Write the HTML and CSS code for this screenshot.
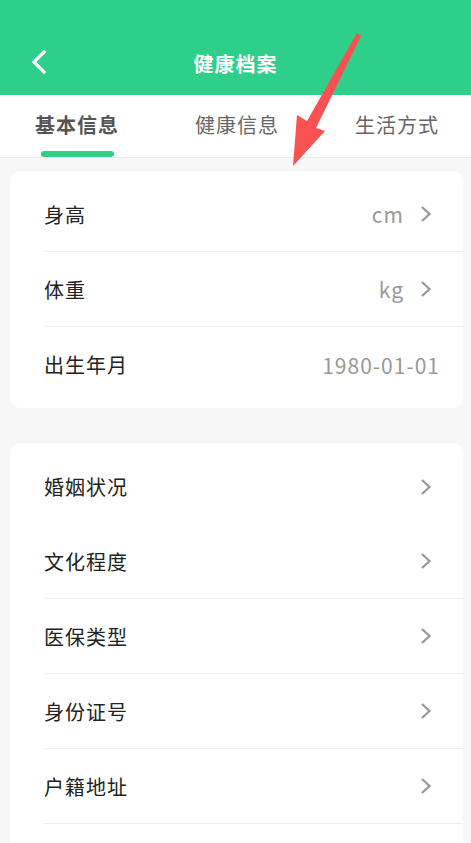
FILE: index.html
```html
<!DOCTYPE html>
<html lang="zh-CN">
<head>
    <meta charset="UTF-8">
    <meta name="viewport" content="width=device-width, initial-scale=1.0">
    <title>健康档案</title>
    <link rel="stylesheet" href="styles.css">
</head>
<body>
    <!-- Top bar -->
    <header class="topbar">
        <div class="nav">
            <button class="back" aria-label="返回">
                <svg width="18" height="24" viewBox="0 0 18 24"><path d="M14 2 L4 12 L14 22" fill="none" stroke="#fff" stroke-width="3.2" stroke-linecap="square"/></svg>
            </button>
            <h1 class="title">健康档案</h1>
        </div>
    </header>

    <!-- Tabs -->
    <nav class="tabs">
        <div class="tab active">基本信息</div>
        <div class="tab">健康信息</div>
        <div class="tab">生活方式</div>
    </nav>

    <main class="content">
        <section class="card">
            <div class="row">
                <div class="row-inner">
                    <span class="label">身高</span>
                    <span class="value">cm</span>
                    <svg class="chev" width="12" height="18" viewBox="0 0 12 18"><path d="M2 2 L9.5 9 L2 16" fill="none" stroke="#999" stroke-width="2.3"/></svg>
                </div>
            </div>
            <div class="row">
                <div class="row-inner">
                    <span class="label">体重</span>
                    <span class="value">kg</span>
                    <svg class="chev" width="12" height="18" viewBox="0 0 12 18"><path d="M2 2 L9.5 9 L2 16" fill="none" stroke="#999" stroke-width="2.3"/></svg>
                </div>
            </div>
            <div class="row">
                <div class="row-inner last">
                    <span class="label">出生年月</span>
                    <span class="value">1980-01-01</span>
                </div>
            </div>
        </section>

        <section class="card">
            <div class="row">
                <div class="row-inner plain">
                    <span class="label">婚姻状况</span>
                    <svg class="chev" width="12" height="18" viewBox="0 0 12 18"><path d="M2 2 L9.5 9 L2 16" fill="none" stroke="#999" stroke-width="2.3"/></svg>
                </div>
            </div>
            <div class="row">
                <div class="row-inner">
                    <span class="label">文化程度</span>
                    <svg class="chev" width="12" height="18" viewBox="0 0 12 18"><path d="M2 2 L9.5 9 L2 16" fill="none" stroke="#999" stroke-width="2.3"/></svg>
                </div>
            </div>
            <div class="row">
                <div class="row-inner">
                    <span class="label">医保类型</span>
                    <svg class="chev" width="12" height="18" viewBox="0 0 12 18"><path d="M2 2 L9.5 9 L2 16" fill="none" stroke="#999" stroke-width="2.3"/></svg>
                </div>
            </div>
            <div class="row">
                <div class="row-inner">
                    <span class="label">身份证号</span>
                    <svg class="chev" width="12" height="18" viewBox="0 0 12 18"><path d="M2 2 L9.5 9 L2 16" fill="none" stroke="#999" stroke-width="2.3"/></svg>
                </div>
            </div>
            <div class="row">
                <div class="row-inner">
                    <span class="label">户籍地址</span>
                    <svg class="chev" width="12" height="18" viewBox="0 0 12 18"><path d="M2 2 L9.5 9 L2 16" fill="none" stroke="#999" stroke-width="2.3"/></svg>
                </div>
            </div>
            <div class="row">
                <div class="row-inner last"></div>
            </div>
        </section>
    </main>

    <!-- annotation arrow drawn over the page -->
    <svg class="pointer" width="471" height="200" viewBox="0 0 471 200">
        <polygon points="357,33 361,36 316,128 325,131 293,166 297,115 307,121" fill="#fa5252"/>
    </svg>
</body>
</html>
```

FILE: styles.css
```css
* {
    box-sizing: border-box;
}
body {
    margin: 0;
    font-family: "Noto Sans CJK SC", "Noto Sans", sans-serif;
    background: #f7f7f7;
    color: #222;
    width: 471px;
    height: 843px;
    overflow: hidden;
}
.topbar {
    background: #2dcf8a;
    height: 95px;
    padding-top: 32px;
}
.nav {
    position: relative;
    height: 63px;
    display: flex;
    align-items: center;
    justify-content: center;
}
.back {
    position: absolute;
    left: 27px;
    top: 18px;
    background: none;
    border: none;
    padding: 0;
    width: 24px;
    height: 26px;
}
.title {
    margin: 0;
    color: #fff;
    font-size: 20px;
    font-weight: bold;
    letter-spacing: 1px;
}
.tabs {
    background: #fff;
    height: 63px;
    border-bottom: 1px solid #ececec;
    display: grid;
    grid-template-columns: repeat(3, 160px);
    margin-left: -3px;
}
.tabs .tab {
    position: relative;
    display: flex;
    justify-content: center;
    padding-top: 15px;
    font-size: 20px;
    color: #666;
    letter-spacing: 1px;
}
.tabs .tab.active {
    color: #555;
    font-weight: bold;
}
.tabs .tab.active::after {
    content: "";
    position: absolute;
    left: 44px;
    bottom: 0;
    width: 73px;
    height: 6px;
    border-radius: 3px;
    background: #2dcf8a;
}
.content {
    padding: 13px 8px 0 10px;
    display: flex;
    flex-direction: column;
    gap: 35px;
}
.card {
    background: #fff;
    border-radius: 10px;
    padding: 6px 0;
}
.row {
    padding-left: 34px;
}
.row-inner {
    height: 75px;
    display: flex;
    align-items: center;
    padding-right: 23px;
    border-bottom: 1px solid #eeeeee;
}
.row-inner.plain,
.row-inner.last {
    border-bottom: none;
}
.label {
    font-size: 20px;
    color: #222;
    letter-spacing: 1px;
    flex: 1;
}
.value {
    font-size: 21px;
    color: #999;
    letter-spacing: 1px;
}
.chev {
    margin: 0 8px 0 16px;
}
.pointer {
    position: absolute;
    left: 0;
    top: 0;
    pointer-events: none;
}
```
